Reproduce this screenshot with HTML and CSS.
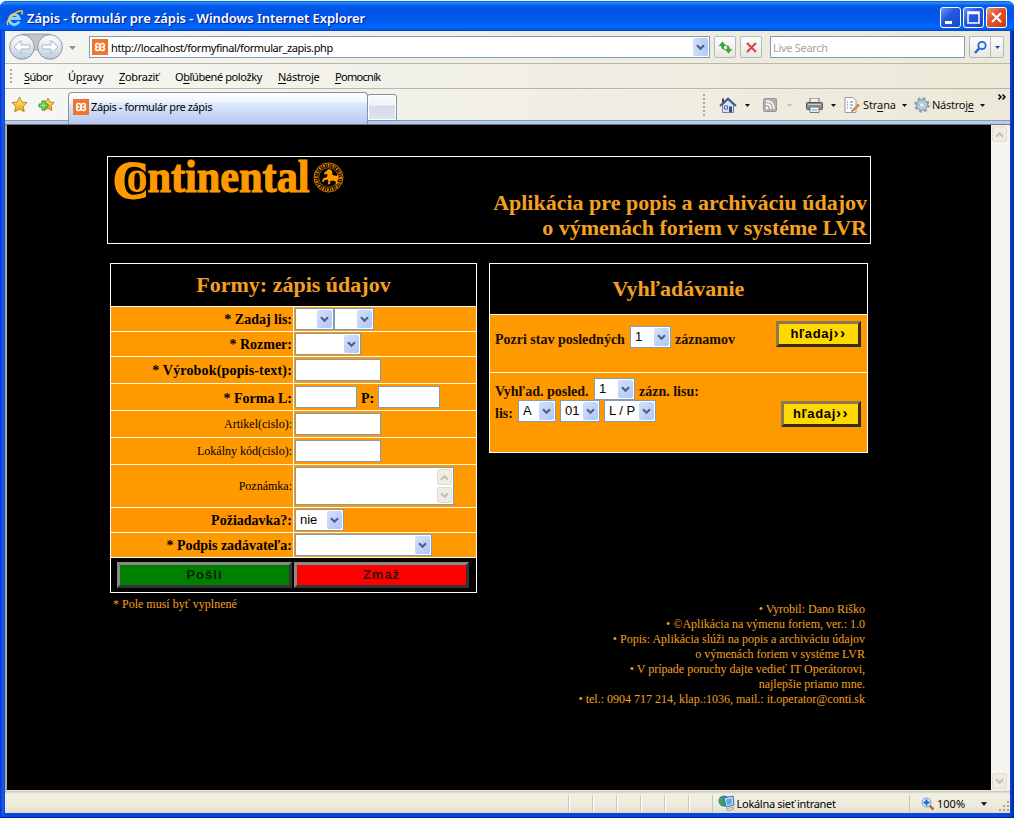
FILE: index.html
```html
<!DOCTYPE html>
<html lang="sk">
<head>
<meta charset="utf-8">
<title>Zápis - formulár pre zápis</title>
<link rel="stylesheet" href="styles.css">
</head>
<body>
<svg width="0" height="0" class="defs">
  <defs>
    <linearGradient id="btn" x1="0" y1="0" x2="0" y2="1"><stop offset="0" stop-color="#fff"/><stop offset=".5" stop-color="#e4e9f0"/><stop offset="1" stop-color="#b8c8da"/></linearGradient>
    <linearGradient id="gold" x1="0" y1="0" x2="0" y2="1"><stop offset="0" stop-color="#ffe88a"/><stop offset="1" stop-color="#f3a712"/></linearGradient>
    <symbol id="xampp" viewBox="0 0 16 16"><rect width="16" height="16" fill="#f0762c"/><path d="M6.500 4.500H5a1.800 1.800 0 0 0 0 3.500a1.800 1.800 0 0 0 0 3.500q3 .3 3-3.500q0-3.800 3-3.500a1.800 1.800 0 0 1 0 3.500a1.800 1.800 0 0 1 0 3.500H9.500M5 8h1.500M9.500 8H11M6 4.500q1.500 0 2 2M10 11.500q-1.500 0-2-2" fill="none" stroke="#fff" stroke-width="1.700"/></symbol>
    <symbol id="chev" viewBox="0 0 9 7"><path d="M1 1.200 4.500 4.700 8 1.200" fill="none" stroke="currentColor" stroke-width="2.200"/></symbol>
    <symbol id="tri" viewBox="0 0 5 3"><path d="M0 0h5L2.500 3z" fill="currentColor"/></symbol>
  </defs>
</svg>
<div class="window">
  <header class="titlebar">
    <svg class="ie" width="17" height="18" viewBox="0 0 17 18"><path d="M13 12.500A5 5 0 1 1 13.300 9.500H5" fill="none" stroke="#8fd2fb" stroke-width="2.800"/><path d="M2 16C-1 12 10 1 16 2c1 .5 .5 2-.5 3.500" fill="none" stroke="#f5c842" stroke-width="1.500"/></svg>
    <span class="title">Zápis - formulár pre zápis - Windows Internet Explorer</span>
    <div class="caption">
      <span class="cap"><svg width="19" height="19"><path d="M4 13h7v3H4z" fill="#fff"/></svg></span>
      <span class="cap"><svg width="19" height="19"><path d="M4 4h11v11H4zM4 5.500h11" fill="none" stroke="#fff" stroke-width="1.500"/></svg></span>
      <span class="cap close"><svg width="19" height="19"><path d="M5 5l9 9M14 5l-9 9" stroke="#fff" stroke-width="2.200"/></svg></span>
    </div>
  </header>

  <div class="navbar">
    <svg class="arrows" width="56" height="30" viewBox="0 0 56 30">
      <path d="M14 3.500h28" stroke="#a9aeb4" stroke-width="2"/><path d="M14 4h28v20q-14-8-28 0z" fill="#c3c6ca"/>
      <g fill="url(#btn)" stroke="#8b97a5"><circle cx="14" cy="16" r="12.300"/><circle cx="42" cy="16" r="12.300"/></g>
      <g fill="#fff" stroke="#a5b4c6" stroke-linejoin="round"><path d="M6 16l7-6.500v4.500h9v4h-9v4.500z"/><path d="M50 16l-7-6.500v4.500h-9v4h9v4.500z"/></g>
    </svg>
    <svg class="histo" width="7" height="4"><use href="#tri"/></svg>
    <div class="address"><svg width="16" height="16"><use href="#xampp"/></svg><span class="url">http://localhost/formyfinal/formular_zapis.php</span><span class="drop"><svg width="9" height="7"><use href="#chev"/></svg></span></div>
    <span class="tool refresh"><svg width="17" height="17" viewBox="0 0 17 17"><path d="M1.500 7l4-4.500 4 4.500H7v2l1.500 1.500H6Q4 10 4 7z" fill="#36a73c"/><path d="M15.500 10l-4 4.500-4-4.500H10V8L8.500 6.500H11q2 .5 2 3.500z" fill="#4aa544"/></svg></span>
    <span class="tool stop"><svg width="15" height="15"><path d="M3 3l9 9M12 3l-9 9" stroke="#d04a4e" stroke-width="2.200"/></svg></span>
    <div class="search">Live Search</div>
    <span class="tool go"><svg width="15" height="15"><circle cx="9" cy="5.500" r="3.700" fill="#e5f3ff" stroke="#2c61d8" stroke-width="1.800"/><path d="M6 8.500L2 13" stroke="#2c61d8" stroke-width="2.500"/></svg></span><span class="tool more"><svg width="5" height="3"><use href="#tri"/></svg></span>
  </div>

  <nav class="menubar">
    <i class="grip"></i>
    <span class="m1"><u>S</u>úbor</span><span class="m2">Úp<u>r</u>avy</span><span class="m3"><u>Z</u>obraziť</span><span class="m4">O<u>b</u>ľúbené položky</span><span class="m5"><u>N</u>ástroje</span><span class="m6"><u>P</u>omocník</span>
  </nav>

  <div class="tabbar">
    <svg class="star" width="17" height="17" viewBox="0 0 17 17"><path d="M8.500 1l2.300 5 5.200.6-3.800 3.700 1 5.400-4.700-2.700-4.700 2.700 1-5.400L1 6.600 6.200 6z" fill="url(#gold)" stroke="#bd8320"/></svg>
    <svg class="star2" width="17" height="17" viewBox="0 0 17 17"><path d="M10 2l1.800 4 4.200.6-3 3.200.8 4.700L10 12.300l-4 2.200.8-4.700-3-3.200L8 6z" fill="url(#gold)" stroke="#bd8320"/><path d="M4 5h3v3h3v3H7v3H4v-3H1V8h3z" fill="#8ee46a" stroke="#31922e"/></svg>
    <div class="tab"><svg width="16" height="16"><use href="#xampp"/></svg><span>Zápis - formulár pre zápis</span></div>
    <div class="newtab"></div>
    <div class="commands">
      <i class="grip"></i>
      <svg class="home" width="18" height="17" viewBox="0 0 18 17"><path d="M3.500 8v7.500h11V8L9 3z" fill="#dbe4f5" stroke="#7382a8"/><path d="M1 9L9 1.500 17 9" fill="none" stroke="#44589a" stroke-width="2"/><path d="M4 1.500v4" stroke="#6a3042" stroke-width="2"/><path d="M5.500 9h3v3h-3z" fill="#fff" stroke="#557"/><path d="M10 9.500h3V15h-3z" fill="#344c93"/></svg>
      <svg class="t1" width="5" height="3"><use href="#tri"/></svg>
      <svg class="rss" width="14" height="14" viewBox="0 0 14 14"><rect x=".5" y=".5" width="13" height="13" rx="1.500" fill="#b2b1ab" stroke="#98978f"/><circle cx="4" cy="10" r="1.300" fill="#fff"/><path d="M3 6q5 0 5 5M3 3q8 0 8 8" fill="none" stroke="#fff" stroke-width="1.400"/></svg>
      <svg class="t2" width="5" height="3"><use href="#tri"/></svg>
      <svg class="print" width="17" height="15" viewBox="0 0 17 15"><path d="M4 0h9v5H4z" fill="#eee" stroke="#777"/><rect x=".5" y="4.500" width="16" height="7" rx="1" fill="#8c8c8c" stroke="#555"/><path d="M2 6.500h13" stroke="#ccc"/><path d="M4 9h9v5.500H4z" fill="#e4f0f8" stroke="#777"/><path d="M6 12h5" stroke="#79a8c4"/></svg>
      <svg class="t3" width="5" height="3"><use href="#tri"/></svg>
      <svg class="doc" width="16" height="16" viewBox="0 0 16 16"><path d="M1 .5h8l3 3v12H1z" fill="#fcfcff" stroke="#99a"/><path d="M3 5h1M6 5h3M3 8h1M6 8h3M3 11h1M6 11h2" stroke="#5b7f95" stroke-width="1"/><path d="M8 13l6-6 1.500 1.500-6 5.500-2 .5z" fill="#e8a050" stroke="#8b6b50" stroke-width=".7"/></svg>
      <span class="strana">Str<u>a</u>na</span>
      <svg class="t4" width="5" height="3"><use href="#tri"/></svg>
      <svg class="gear" width="16" height="16" viewBox="0 0 16 16"><circle cx="8" cy="8" r="6.500" fill="none" stroke="#8ba0b4" stroke-width="2.500" stroke-dasharray="2.700 2.405"/><circle cx="8" cy="8" r="4.500" fill="#f4f5f5" stroke="#abc0d1" stroke-width="2.500"/><circle cx="8" cy="8" r="5.700" fill="none" stroke="#7b92a8" stroke-width=".7"/><circle cx="8" cy="8" r="2.500" fill="#f2efe2" stroke="#7b92a8" stroke-width=".7"/></svg>
      <span class="nastroje">Nástroj<u>e</u></span>
      <svg class="t5" width="5" height="3"><use href="#tri"/></svg>
      <svg class="over" width="8" height="6" viewBox="0 0 8 6"><path d="M.5 .5L3 3 .5 5.500M4.500 .5L7 3 4.500 5.500" fill="none" stroke="#000" stroke-width="1.500"/></svg>
    </div>
  </div>

  <div class="view">
    <main class="page">
      <section class="banner">
        <svg class="logo" width="240" height="50" viewBox="0 0 240 50">
          <text class="logoC" x="5" y="41" textLength="36" lengthAdjust="spacingAndGlyphs">C</text>
          <text class="logoO" x="18.500" y="35" textLength="21" lengthAdjust="spacingAndGlyphs">o</text>
          <text x="39.500" y="35" textLength="162" lengthAdjust="spacingAndGlyphs">ntinental</text>
          <g fill="none" stroke="#f90"><circle cx="220.500" cy="20.500" r="14.500" stroke-width=".8"/><circle cx="220.500" cy="20.500" r="12.200" stroke-width="3" stroke-dasharray="1.700 1 .8 1.200" opacity=".85"/><circle cx="220.500" cy="20.500" r="9.800" stroke-width=".6"/></g>
          <path d="M220 12.500l1.500-.5 2.500 2 .5 4 4 1 2-1.500v5l-1.500 1 1 3-2.500 1.500 .5-3-2.500-1.500-3 .5-.5 3-2.500.5 1-3-1-2-3.500 1-.5 2-1.500-1 1-3 4-1.500.500-3-3 .5-.5-1.500z" fill="#f90"/>
        </svg>
        <h1>Aplikácia pre popis a archiváciu údajov<br><span>o výmenách foriem v systéme LVR</span></h1>
      </section>

      <div class="columns">
        <div class="left">
          <section class="form">
            <h2>Formy: zápis údajov</h2>
            <div class="row r25"><label>* Zadaj lis:</label><div><span class="sel w39"><b></b><i><svg width="9" height="7"><use href="#chev"/></svg></i></span><span class="sel w40"><b></b><i><svg width="9" height="7"><use href="#chev"/></svg></i></span></div></div>
            <div class="row r25"><label>* Rozmer:</label><div><span class="sel w66"><b></b><i><svg width="9" height="7"><use href="#chev"/></svg></i></span></div></div>
            <div class="row r27"><label class="wide">* Výrobok(popis-text):</label><div><span class="inp w86"></span></div></div>
            <div class="row r27"><label>* Forma L:</label><div><span class="inp w62"></span><strong>P:</strong><span class="inp w62"></span></div></div>
            <div class="row r27"><label class="thin">Artikel(cislo):</label><div><span class="inp w86"></span></div></div>
            <div class="row r27"><label class="thin">Lokálny kód(cislo):</label><div><span class="inp w86"></span></div></div>
            <div class="row r43"><label class="thin">Poznámka:</label><div><span class="area"><em class="up"><svg width="9" height="7"><use href="#chev"/></svg></em><em><svg width="9" height="7"><use href="#chev"/></svg></em></span></div></div>
            <div class="row r25 dark"><label>Požiadavka?:</label><div><span class="sel w50"><b>nie</b><i><svg width="9" height="7"><use href="#chev"/></svg></i></span></div></div>
            <div class="row r25"><label>* Podpis zadávateľa:</label><div><span class="sel w137"><b></b><i><svg width="9" height="7"><use href="#chev"/></svg></i></span></div></div>
            <div class="actions"><span class="send">Pošli</span><span class="reset">Zmaž</span></div>
          </section>
          <p class="note">* Pole musí byť vyplnené</p>
        </div>

        <div class="right">
          <section class="find">
            <h2>Vyhľadávanie</h2>
            <div class="q q1">
              <div class="line"><span class="g1">Pozri stav posledných</span><span class="sel w41"><b>1</b><i><svg width="9" height="7"><use href="#chev"/></svg></i></span><span class="g2">záznamov</span></div>
              <span class="go1">hľadaj<small>››</small></span>
            </div>
            <div class="q q2">
              <div>
                <div class="line"><span class="g3">Vyhľad. posled.</span><span class="sel w41"><b>1</b><i><svg width="9" height="7"><use href="#chev"/></svg></i></span><span class="g4">zázn. lisu:</span></div>
                <div class="line"><span class="g5">lis:</span><span class="sel w38"><b>A</b><i><svg width="9" height="7"><use href="#chev"/></svg></i></span><span class="sel w40"><b>01</b><i><svg width="9" height="7"><use href="#chev"/></svg></i></span><span class="sel w53"><b>L / P</b><i><svg width="9" height="7"><use href="#chev"/></svg></i></span></div>
              </div>
              <span class="go2">hľadaj<small>››</small></span>
            </div>
          </section>
          <div class="credits">
            <p>• Vyrobil: Dano Riško</p>
            <p class="c2">• ©Aplikácia na výmenu foriem, ver.: 1.0</p>
            <p>• Popis: Aplikácia slúži na popis a archiváciu údajov</p>
            <p>o výmenách foriem v systéme LVR</p>
            <p class="c5">• V prípade poruchy dajte vedieť IT Operátorovi,</p>
            <p>najlepšie priamo mne.</p>
            <p>• tel.: 0904 717 214, klap.:1036, mail.: it.operator@conti.sk</p>
          </div>
        </div>
      </div>
    </main>
    <aside class="scroll"><em class="up"><svg width="9" height="7"><use href="#chev"/></svg></em><em><svg width="9" height="7"><use href="#chev"/></svg></em></aside>
  </div>

  <footer class="status">
    <i class="cells"></i>
    <div class="zone"><svg width="17" height="17" viewBox="0 0 17 17"><circle cx="6" cy="6" r="5.500" fill="#2a78c8"/><path d="M2 3q3-2 5-1L5 6l2 3-2 2Q1 8 1 6z" fill="#3fa845"/><path d="M6 3l9-2 1 9-8 2z" fill="#bfe2f7" stroke="#426ca6"/><path d="M8 4.500l5.500-1 .5 5.500-5 1z" fill="#5ea9e4"/><path d="M8 14l7-2 1 2-6 2z" fill="#ddd" stroke="#888" stroke-width=".6"/></svg><span>Lokálna sieť intranet</span></div>
    <div class="zoom"><svg width="14" height="14" viewBox="0 0 14 14"><path d="M8 8l4.500 4.500" stroke="#a9743e" stroke-width="2.500"/><circle cx="5.500" cy="5.500" r="4.500" fill="#d7ecfb" stroke="#6d9cc9"/><path d="M5.500 2.500v6M2.500 5.500h6" stroke="#155fc5" stroke-width="1.800"/></svg><span>100%</span><svg class="zt" width="6" height="4"><use href="#tri"/></svg></div>
    <svg class="size" width="12" height="12"><g fill="#aaa793"><path d="M9 0h2v2H9zM5 4h2v2H5zM9 4h2v2H9zM1 8h2v2H1zM5 8h2v2H5zM9 8h2v2H9z"/></g></svg>
  </footer>
</div>
</body>
</html>
```
FILE: styles.css
```css
* { box-sizing: border-box; }
body { margin: 0; background: #fff; font: 11px/14px "Noto Sans", sans-serif; color: #000; }
.defs { position: absolute; }
svg { display: block; flex: none; }
span, label { white-space: nowrap; }
u { text-decoration-thickness: 1px; text-underline-offset: 2px; }

.window { width: 1014px; height: 818px; display: flex; flex-direction: column; padding: 0 4px 4px 5px; background: linear-gradient(90deg, #0831d9 0, #1660e8 3px, #0846d8 5px, #0846d8 1010px, #0023a8 1014px); border-top: 1px solid #d8f4fc; border-bottom: 1px solid #001c98; border-radius: 7px 7px 0 0; overflow: hidden; }
.titlebar { flex: none; height: 30px; margin: 0 -4px 0 -5px; padding: 3px 7px 0 6px; display: flex; align-items: center; background: linear-gradient(#0f5fd0 0, #2a8cff 2px, #0560f0 4px, #0054e3 9px, #0058ec 18px, #0068ff 26px, #0060f0 28px, #003ccb 30px); }
.title { margin-left: 4px; flex: 1; color: #fff; font: bold 13px/20px "Noto Sans", sans-serif; font-weight: 600; letter-spacing: -.06px; text-shadow: 1px 1px 1px #0a1883; }
.caption { display: flex; gap: 2px; }
.cap { width: 21px; height: 21px; border: 1px solid #fff; border-radius: 3px; background: linear-gradient(135deg, #6d99f5, #2558df 40%, #1f50d8 70%, #1846b8); }
.close { background: linear-gradient(135deg, #f09a7d, #e05330 40%, #d84a22 70%, #b4381a); }

.navbar { flex: none; height: 33px; display: flex; align-items: flex-start; background: linear-gradient(90deg, #f4f4f1, #ece9d8); border-bottom: 1px solid #bab7a9; }
.arrows { margin-left: 3px; }
.histo { margin: 15px 0 0 5px; color: #8e8f90; }
.address { margin: 5px 0 0 13px; width: 621px; height: 22px; display: flex; align-items: center; border: 1px solid #7f9db9; background: #fff; padding-left: 2px; }
.url { margin-left: 3px; flex: 1; letter-spacing: -.41px; padding-top: 1px; }
.drop { width: 15px; height: 18px; margin-right: 1px; border-radius: 2px; background: linear-gradient(90deg, #cfdefd, #b3c8f7); color: #4d6185; display: grid; place-items: center; }
.tool { height: 22px; margin-top: 5px; border: 1px solid #a9bccd; border-radius: 2px; background: linear-gradient(#fdfdfb, #e9e7dc); display: grid; place-items: center; }
.refresh { width: 22px; margin-left: 4px; }
.stop { width: 22px; margin-left: 4px; }
.search { width: 195px; height: 22px; margin: 5px 0 0 8px; border: 1px solid #7f9db9; background: #fff; color: #a5a498; line-height: 21px; padding-left: 2px; letter-spacing: -.3px; }
.go { width: 22px; margin-left: 4px; border-radius: 2px 0 0 2px; }
.more { width: 14px; margin-left: -1px; border-radius: 0 2px 2px 0; color: #1c4bbf; }

.menubar { flex: none; height: 25px; display: flex; align-items: center; letter-spacing: -.4px; padding-top: 1px; background: linear-gradient(90deg, #f6f6f3, #ece9d8); border-bottom: 1px solid #bab7a9; }
.grip { width: 2px; height: 15px; background: repeating-linear-gradient(#aaa89c 0 2px, transparent 2px 4px); flex: none; }
.menubar .grip { margin-left: 5px; }
.m1 { width: 44px; margin-left: 12px; letter-spacing: -.5px; }
.m2 { width: 51px; letter-spacing: -.2px; }
.m3 { width: 56px; letter-spacing: -.3px; }
.m4 { width: 103px; }
.m5 { width: 57px; letter-spacing: -.3px; }
.m6 { letter-spacing: -.7px; }

.tabbar { flex: none; height: 36px; display: flex; align-items: flex-start; background: linear-gradient(90deg, #f6f6f3, #ece9d8); border-bottom: 1px solid #77756b; box-shadow: inset 0 -3px #b6c9f2, inset 0 -4px #8e9ba8; }
.star { margin: 7px 0 0 6px; }
.star2 { margin: 7px 0 0 10px; }
.tab { width: 300px; height: 32px; margin: 3px 0 0 13px; padding: 0 0 3px 4px; display: flex; align-items: center; gap: 2px; border: 1px solid #86919e; border-bottom: 0; border-radius: 4px 4px 0 0; background: linear-gradient(#fff 0, #f0f6fe 8px, #dce8fb 11px, #b6c9f2 30px); letter-spacing: -.4px; }
.newtab { width: 30px; height: 27px; margin: 5px 0 0 -1px; border: 1px solid #86919e; border-radius: 3px 3px 0 0; background: linear-gradient(#f8faff 0, #f1f3fa 40%, #d6dbea 45%, #dde2ef); box-shadow: inset 0 0 0 1px #fff; }
.commands { flex: 1; height: 32px; display: flex; align-items: center; padding-left: 306px; color: #111; }
.commands .grip { height: 22px; }
.home { margin-left: 14px; }
.t1 { margin-left: 8px; }
.rss { margin-left: 13px; }
.t2 { margin-left: 10px; color: #c0beb2; }
.print { margin-left: 14px; }
.t3 { margin-left: 8px; }
.doc { margin-left: 8px; }
.strana { margin-left: 3px; width: 35px; letter-spacing: -.1px; }
.t4 { margin-left: 4px; }
.gear { margin-left: 7px; }
.nastroje { margin-left: 2px; width: 44px; letter-spacing: -.25px; }
.t5 { margin-left: 4px; }
.over { margin: -17px 0 0 13px; }

.view { flex: none; height: 666px; display: flex; background: #f6f5f0; border-left: 2px solid #aaa89c; border-bottom: 1px solid #ece9d8; }
.page { width: 984px; padding: 31px 0 0 100px; background: #000; font-family: "Liberation Serif", serif; }
.scroll { width: 17px; background: #f6f5f0; margin-right: 2px; display: flex; flex-direction: column; justify-content: space-between; align-items: center; padding: 1px 0; }
em { width: 15px; height: 16px; border: 1px solid #dedbcf; border-radius: 2px; background: #efede3; color: #c2c0b4; display: grid; place-items: center; }
.up svg { transform: scaleY(-1); }

.banner { width: 764px; height: 88px; border: 1px solid #fff; display: flex; justify-content: space-between; }
.logo { overflow: visible; }
.logo text { font: bold 46px "Liberation Serif", serif; fill: #f90; stroke: #f90; stroke-width: 1.2; }
.logo .logoC { font-size: 53px; stroke-width: 2; }
.logo .logoO { stroke: #000; stroke-width: 4; paint-order: stroke; }
h1, h2 { margin: 0; color: #f4a020; font-weight: bold; font-size: 22px; }
h1 { margin: 33px 3px 0 0; line-height: 25px; text-align: right; white-space: nowrap; }
h2 { text-align: center; }

.columns { display: flex; margin: 19px 0 0 3px; gap: 12px; align-items: flex-start; }
.form { width: 367px; height: 330px; border: 1px solid #fff; }
.form h2 { height: 42px; line-height: 42px; }
.row { display: grid; grid-template-columns: 182px 1fr; border-top: 1px solid #fffbe8; background: #f90; }
.row.dark { background: #ff9400; }
.row label { text-align: right; padding: 1px 1px 0 0; font-weight: bold; font-size: 14px; display: flex; align-items: center; justify-content: flex-end; }
.row label.wide { letter-spacing: .17px; }
.row label.thin { font-weight: normal; font-size: 12px; padding-top: 0; }
.row > div { border-left: 1px solid #fffbe8; padding: 1px 0 0 1px; display: flex; align-items: flex-start; }
.row strong { font-size: 14px; width: 21px; text-align: center; line-height: 26px; }
.r25 { height: 25px; } .r27 { height: 27px; } .r43 { height: 43px; }
.r27 > div { padding-top: 2px; }
.sel { height: 22px; border: 1px solid #7f9db9; background: #fff; display: inline-flex; align-items: center; justify-content: space-between; padding: 0 1px 0 4px; font: 13px/18px "Liberation Sans", sans-serif; color: #000; flex: none; }
.sel b { font-weight: normal; }
.sel i { width: 15px; height: 18px; border-radius: 2px; background: linear-gradient(135deg, #d5e1fd, #b0c5f6); color: #4d6185; display: grid; place-items: center; flex: none; }
.inp { height: 22px; border: 1px solid #7f9db9; background: #fff; }
.w38 { width: 38px; } .w39 { width: 39px; } .w40 { width: 40px; } .w41 { width: 41px; } .w50 { width: 49px; } .w53 { width: 52px; } .w62 { width: 62px; } .w66 { width: 66px; } .w86 { width: 86px; } .w137 { width: 137px; }
.area { width: 159px; height: 38px; margin-top: 1px; border: 1px solid #7f9db9; background: #fff; display: flex; flex-direction: column; justify-content: space-between; align-items: flex-end; padding: 1px; }
.actions { height: 35px; border-top: 1px solid #fff; padding: 4px 6px; display: flex; gap: 2px; font: bold 13px/19px "Liberation Sans", sans-serif; text-align: center; color: #301008; }
.actions span { width: 175px; height: 26px; border: 3px outset #888; letter-spacing: 1px; }
.send { background: #008000; }
.actions .send { color: #062006; }
.reset { background: #f00; }
.note { margin: 4px 0 0 3px; color: #f4a020; font-size: 12px; line-height: 15px; }

.find { width: 379px; height: 190px; border: 1px solid #fff; font-size: 14px; font-weight: bold; color: #1a0e00; }
.find h2 { height: 50px; line-height: 50px; }
.q { background: #f90; border-top: 1px solid #fffbe8; display: flex; justify-content: space-between; padding-left: 5px; }
.q1 { height: 58px; padding-top: 6px; }
.q2 { height: 80px; padding-top: 5px; }
.line { display: flex; height: 22px; }
.q1 .line { margin-top: 5px; }
.line > span:not(.sel) { line-height: 27px; }
.g1 { width: 135px; } .g2 { margin-left: 4px; }
.g3 { width: 99px; } .g4 { margin-left: 4px; }
.g5 { width: 19px; }
.line .sel + .sel, .g5 + .sel { margin-left: 4px; }
.go1, .go2 { height: 26px; border: 3px outset #8a7a50; background: #ffd800; font: bold 13px/19px "Liberation Sans", sans-serif; text-align: center; color: #000; letter-spacing: .7px; margin-right: 6px; }
.go1 { width: 85px; } .go2 { width: 80px; margin-top: 23px; }
.find small { font-size: 15px; line-height: 15px; letter-spacing: 1.5px; }
.credits { margin-top: 149px; text-align: right; color: #f4a020; font-size: 12px; line-height: 15px; padding-right: 3px; }
.credits p { margin: 0; white-space: nowrap; }

.status { flex: 1; display: flex; align-items: center; padding-top: 3px; background: linear-gradient(#c8c5b6 0, #f2f0e5 3px, #ece9d8 16px, #e2dfce); }
.cells { width: 144px; height: 17px; margin-left: 563px; background: repeating-linear-gradient(90deg, #c9c6b4 0 1px, #fff 1px 2px, transparent 2px 24px); }
.zone { width: 198px; height: 17px; display: flex; align-items: center; gap: 2px; border-left: 1px solid #c9c6b4; padding-left: 5px; letter-spacing: -.3px; }
.zoom { height: 17px; display: flex; align-items: center; border-left: 1px solid #c9c6b4; padding-left: 11px; }
.zoom span { margin-left: 2px; width: 30px; }
.zt { margin-left: 14px; }
.size { margin: 6px 0 0 11px; }
```
